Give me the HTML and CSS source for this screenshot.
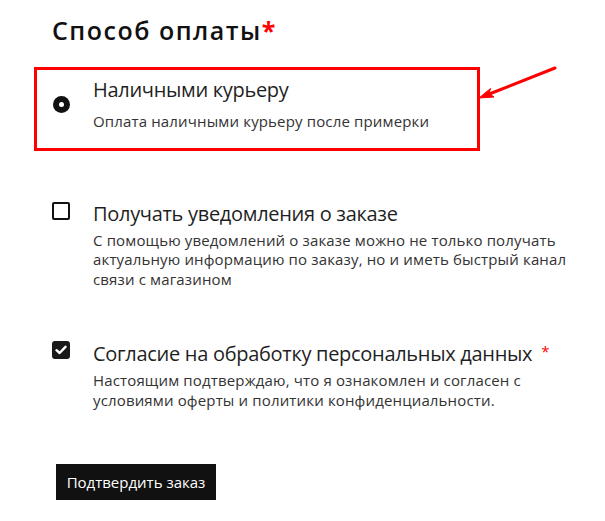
FILE: index.html
```html
<!DOCTYPE html>
<html lang="ru">
<head>
<meta charset="utf-8">
<title>Способ оплаты</title>
<link rel="stylesheet" href="styles.css">
</head>
<body>
<div class="checkout">
  <h2 class="title">Способ оплаты<span class="req">*</span></h2>

  <div class="pay-box">
    <span class="radio"><span class="radio-dot"></span></span>
    <div class="opt-text">
      <div class="label">Наличными курьеру</div>
      <div class="desc">Оплата наличными курьеру после примерки</div>
    </div>
  </div>

  <div class="check-row first">
    <span class="checkbox"></span>
    <div class="opt-text">
      <div class="label">Получать уведомления о заказе</div>
      <div class="desc">С помощью уведомлений о заказе можно не только получать<br>актуальную информацию по заказу, но и иметь быстрый канал<br>связи с магазином</div>
    </div>
  </div>

  <div class="check-row second">
    <span class="checkbox checked">
      <svg width="12" height="10" viewBox="0 0 12 10"><path d="M1.5 5.2 L4.6 8 L10.5 1.8" fill="none" stroke="#fff" stroke-width="2.4" stroke-linecap="round" stroke-linejoin="round"/></svg>
    </span>
    <div class="opt-text">
      <div class="label">Согласие на обработку персональных данных<span class="req-small">*</span></div>
      <div class="desc">Настоящим подтверждаю, что я ознакомлен и согласен с<br>условиями оферты и политики конфиденциальности.</div>
    </div>
  </div>

  <button class="submit">Подтвердить заказ</button>
</div>

<svg class="arrow" width="605" height="521" viewBox="0 0 605 521">
  <line x1="555" y1="68" x2="488" y2="94.5" stroke="#f00" stroke-width="3" stroke-linecap="round"/>
  <polygon points="479,98 490.5,88.5 489,93.5 494,97" fill="#f00" stroke="#f00" stroke-width="1" stroke-linejoin="round"/>
</svg>
</body>
</html>
```

FILE: styles.css
```css
html, body {
  margin: 0;
  padding: 0;
  background: #fff;
}

body {
  font-family: "Open Sans", "DejaVu Sans", sans-serif;
  color: #222;
  width: 605px;
  height: 521px;
  overflow: hidden;
  position: relative;
}

.checkout {
  padding: 14.5px 0 0 34px;
  display: flex;
  flex-direction: column;
  align-items: flex-start;
}

.title {
  margin: 0 0 0 18px;
  font-size: 25px;
  line-height: 30px;
  font-weight: 600;
  letter-spacing: 1.5px;
  color: #111;
}

.req {
  color: #f00;
  font-weight: 700;
  letter-spacing: 0;
  margin-left: 0;
}

.pay-box {
  margin-top: 22.5px;
  box-sizing: border-box;
  width: 446px;
  border: 3px solid #f00;
  padding: 8px 16px 17px 16px;
  display: flex;
  align-items: center;
  gap: 23px;
}

.radio {
  width: 17px;
  height: 17px;
  border-radius: 50%;
  background: #111;
  display: flex;
  align-items: center;
  justify-content: center;
  flex: none;
}

.radio-dot {
  width: 5px;
  height: 5px;
  border-radius: 50%;
  background: #fff;
}

.label {
  font-size: 20px;
  line-height: 24px;
  letter-spacing: -0.3px;
  color: #1f1f1f;
}

.pay-box .desc {
  margin-top: 8.5px;
  line-height: 20px;
}

.desc {
  font-size: 15px;
  line-height: 19.5px;
  letter-spacing: 0.15px;
  color: #333;
  margin-top: 5px;
}

.check-row {
  display: flex;
  align-items: flex-start;
  gap: 23px;
  margin-left: 18px;
}

.check-row.first {
  margin-top: 51px;
}

.check-row.second {
  margin-top: 50px;
}

.checkbox {
  box-sizing: border-box;
  width: 18px;
  height: 18px;
  border: 2.5px solid #111;
  border-radius: 2px;
  flex: none;
  display: flex;
  align-items: center;
  justify-content: center;
}

.checkbox.checked {
  margin-top: 2px;
  background: #1a1a1a;
  border: none;
  border-radius: 3px;
}

.req-small {
  color: #f00;
  font-size: 15px;
  letter-spacing: 0;
  vertical-align: 4px;
  margin-left: 9px;
}

.submit {
  margin-top: 54px;
  margin-left: 22px;
  width: 160px;
  height: 36px;
  border: none;
  border-radius: 0;
  background: #111;
  color: #fff;
  font-family: "Open Sans", "DejaVu Sans", sans-serif;
  font-size: 15px;
  padding: 0;
  cursor: pointer;
}

.arrow {
  position: absolute;
  left: 0;
  top: 0;
  pointer-events: none;
}
```
